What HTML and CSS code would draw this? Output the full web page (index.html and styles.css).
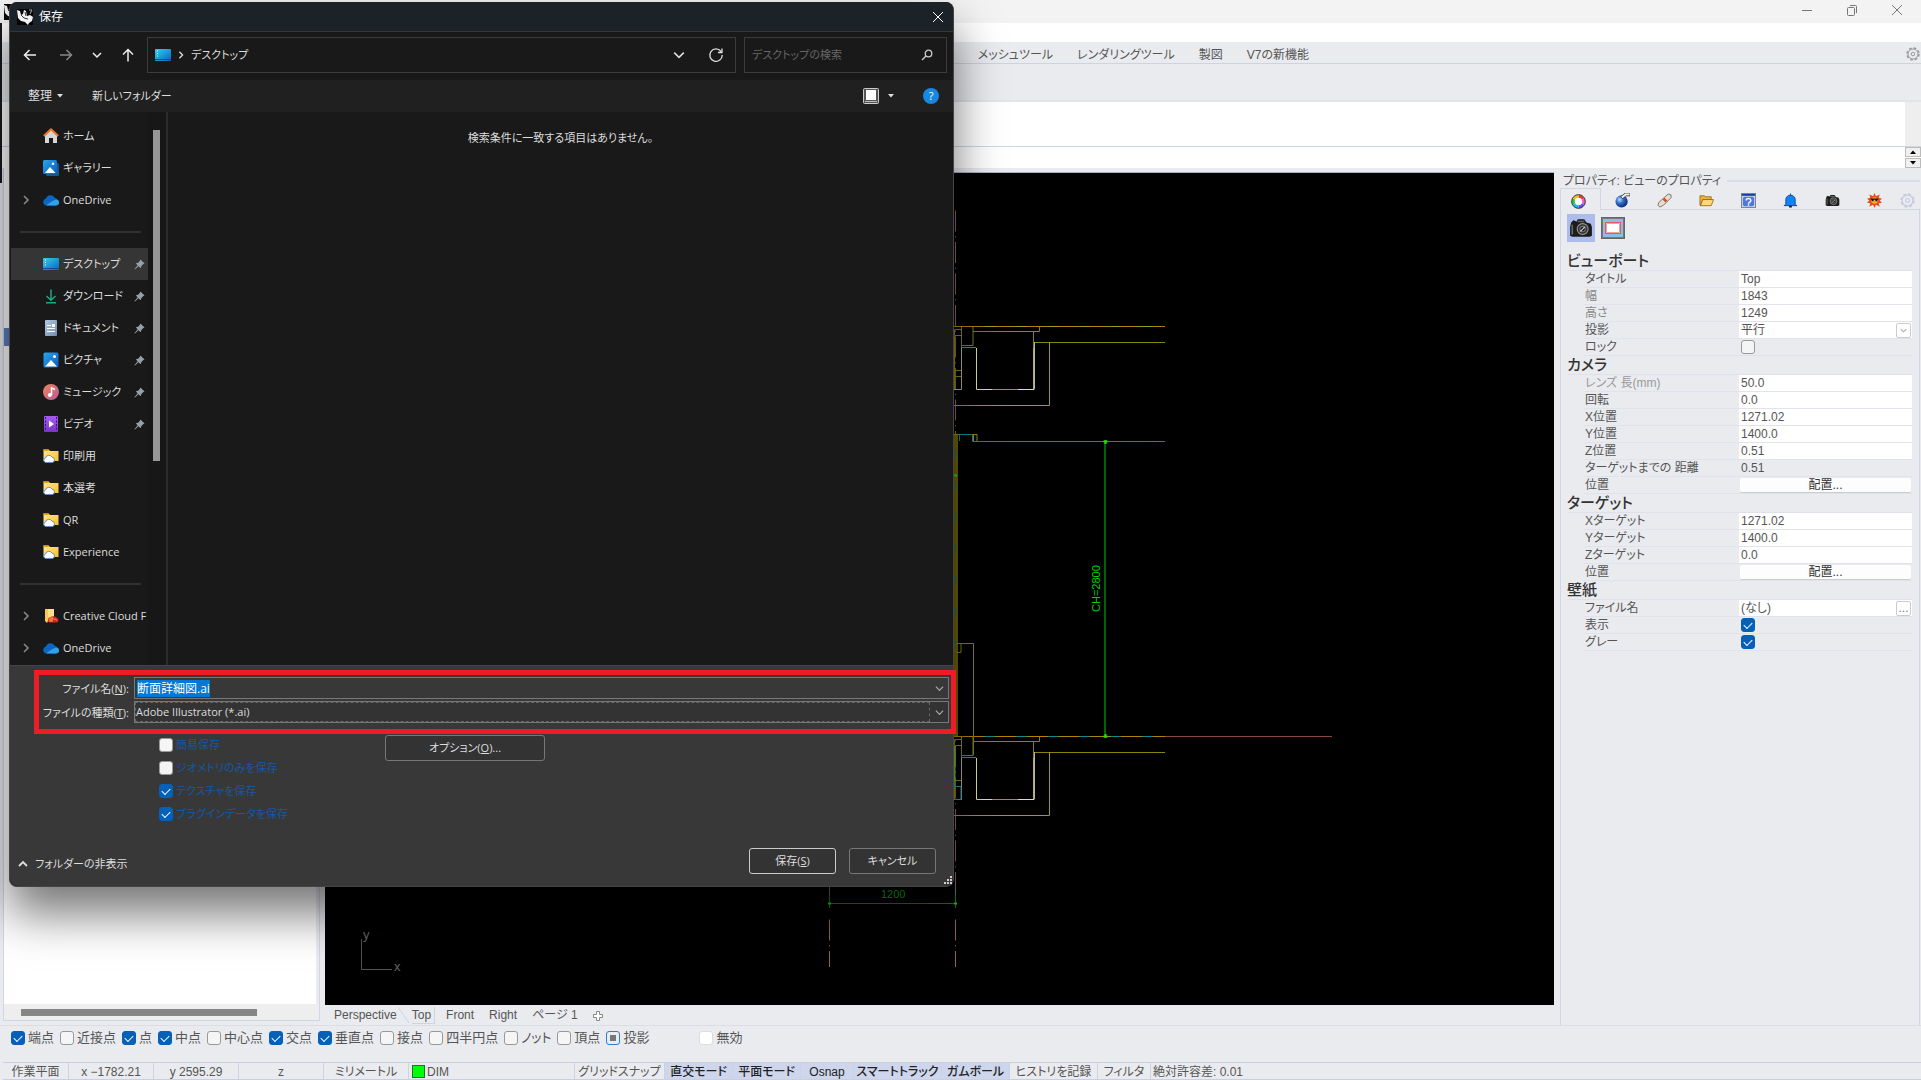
FILE: index.html
```html
<!DOCTYPE html>
<html lang="ja">
<head>
<meta charset="utf-8">
<title>保存</title>
<link rel="stylesheet" href="styles.css">
</head>
<body>
<svg class="sprite" aria-hidden="true">
  <defs>
    <linearGradient id="g-desk" x1="0" y1="0" x2="1" y2="1"><stop offset="0" stop-color="#35d0ea"/><stop offset="1" stop-color="#0a62c4"/></linearGradient>
    <linearGradient id="g-pic" x1="0" y1="0" x2="1" y2="1"><stop offset="0" stop-color="#2ba4ec"/><stop offset="1" stop-color="#0a5cc0"/></linearGradient>
    <linearGradient id="g-music" x1="0" y1="0" x2="1" y2="1"><stop offset="0" stop-color="#f2865a"/><stop offset="1" stop-color="#b6589c"/></linearGradient>
    <linearGradient id="g-video" x1="0" y1="0" x2="0" y2="1"><stop offset="0" stop-color="#a65cf0"/><stop offset="1" stop-color="#7a34c8"/></linearGradient>
    <linearGradient id="g-doc" x1="0" y1="0" x2="1" y2="1"><stop offset="0" stop-color="#b4c8de"/><stop offset="1" stop-color="#6f8cb2"/></linearGradient>
    <linearGradient id="g-folder" x1="0" y1="0" x2="1" y2="1"><stop offset="0" stop-color="#ffe79a"/><stop offset="1" stop-color="#fbc02d"/></linearGradient>
    <radialGradient id="g-ball" cx=".35" cy=".35" r=".7"><stop offset="0" stop-color="#b8dcff"/><stop offset=".45" stop-color="#2e6cc8"/><stop offset="1" stop-color="#0a2470"/></radialGradient>
    <symbol id="i-rhino" viewBox="0 0 16 16"><path d="M0 0h16v16H0z" fill="#050505"/><path d="M0 1l3 1 1 4 2-1 1-4 2 1 1 5 3-1 3 2-1 4-3 2-1 2-3-3-4-1-3-3z" fill="#f2f2f2"/><path d="M4 6l3 3 4 1M8 3l1 4" stroke="#333" fill="none"/><path d="M12 1h3l-2 4" stroke="#aaa" fill="none"/></symbol>
    <symbol id="i-desktop" viewBox="0 0 16 16"><rect y="2" width="16" height="12" rx="1" fill="url(#g-desk)"/><path d="M2 4h1M2 6.500h1M2 9h1" stroke="#d8f6ff"/><path d="M0 12.500h16" stroke="#0c4f96"/></symbol>
    <symbol id="i-home" viewBox="0 0 16 16"><path d="M2 7.500L8 2l6 5.500V15h-4v-5H6v5H2z" fill="#d6d6d6"/><path d="M.8 8L8 1.300 15.200 8" stroke="#f0762b" stroke-width="2" fill="none" stroke-linejoin="round"/></symbol>
    <symbol id="i-picture" viewBox="0 0 16 16"><rect x=".5" y=".5" width="15" height="15" rx="1.500" fill="url(#g-pic)"/><path d="M2 14.500L8 8l6 6.500z" fill="#fff"/><circle cx="11.500" cy="4.500" r="1.500" fill="#fff"/></symbol>
    <symbol id="i-gallery" viewBox="0 0 16 16"><rect x="3" y="3" width="13" height="13" rx="1.500" fill="#1553a4"/><rect width="14" height="14" rx="1.500" fill="url(#g-pic)"/><path d="M2 13l5-6 5.500 6z" fill="#fff"/><circle cx="10" cy="3.800" r="1.300" fill="#fff"/></symbol>
    <symbol id="i-onedrive" viewBox="0 0 16 16"><path d="M3.500 13.500a3.500 3.500 0 01-.6-6.900A5 5 0 0112 6a4 4 0 011 7.500z" fill="#0a66c2"/><path d="M3 13.500l6.500-4.500 3.500-1.500a3 3 0 010 6z" fill="#2ca3ea"/></symbol>
    <symbol id="i-download" viewBox="0 0 16 16"><path d="M8 1.500V12M3.500 8L8 12.200 12.500 8M3 14.800h10" stroke="#25a583" stroke-width="1.500" fill="none"/></symbol>
    <symbol id="i-doc" viewBox="0 0 16 16"><rect x="2" y="0" width="12" height="16" rx="1" fill="url(#g-doc)"/><path d="M4 5.500h4M4 8.500h8M4 11.500h8" stroke="#fff"/><rect x="9" y="4" width="3" height="3" fill="#fff"/></symbol>
    <symbol id="i-music" viewBox="0 0 16 16"><circle cx="8" cy="8" r="8" fill="url(#g-music)"/><path d="M8.500 11V4l3.500 1.500" stroke="#fff" stroke-width="1.500" fill="none"/><circle cx="6.800" cy="11" r="2" fill="#fff"/></symbol>
    <symbol id="i-video" viewBox="0 0 16 16"><rect x="1" width="14" height="16" rx="1" fill="url(#g-video)"/><path d="M2.500 1v14M13.500 1v14" stroke="#3b1470" stroke-dasharray="2 1.500"/><path d="M6 4.500l5 3.500-5 3.500z" fill="#fff"/></symbol>
    <symbol id="i-folder" viewBox="0 0 16 16"><path d="M.5 1.500h5l1.500 1.500h8.500v10H.5z" fill="url(#g-folder)"/><path d="M.5 1.500h5l1.500 1.500H.5z" fill="#e8a21c"/><path d="M2.800 14.500a2.300 2.300 0 01-.3-4.500 3.500 3.500 0 016.500-.8 2.700 2.700 0 01.5 5.300z" fill="#fff" stroke="#5b8fd0"/></symbol>
    <symbol id="i-cc" viewBox="0 0 16 16"><path d="M2 1h9v12H5l-1 2-2-2z" fill="#f8c95a"/><path d="M5 1h6v10H5z" fill="#ffe08a"/><path d="M7.500 14.500a2.600 2.600 0 010-5.200 4.300 4.300 0 016.500.8 2.300 2.300 0 010 4.400z" fill="#c8281e"/><path d="M5 10l5-2v6H6z" fill="#f0682c"/><path d="M8 12.500a1.500 1.500 0 013-1 1.500 1.500 0 012.500 1" stroke="#ff9a6a" fill="none"/></symbol>
    <symbol id="i-pin" viewBox="0 0 12 12"><path d="M7 .5L11.500 5l-1.500.6-2 2L7.500 10 5 8 1 11.500.5 11 4 7 2 4.500 4.500 4l2-2z" fill="#9aa0a8"/></symbol>
    <symbol id="i-down" viewBox="0 0 10 10"><path d="M1 3l4 4 4-4" stroke="currentColor" fill="none" stroke-width="1.300"/></symbol>
    <symbol id="i-right" viewBox="0 0 10 10"><path d="M3 1l4 4-4 4" stroke="currentColor" fill="none" stroke-width="1.600"/></symbol>
    <symbol id="i-up" viewBox="0 0 10 10"><path d="M1 7l4-4 4 4" stroke="currentColor" fill="none" stroke-width="1.800"/></symbol>
    <symbol id="i-tri" viewBox="0 0 6 4"><path d="M0 0h6L3 3.500z" fill="currentColor"/></symbol>
    <symbol id="i-x" viewBox="0 0 12 12"><path d="M1 1l10 10M11 1L1 11" stroke="currentColor" fill="none"/></symbol>
    <symbol id="i-gear" viewBox="0 0 14 14"><circle cx="7" cy="7" r="5" fill="none" stroke="currentColor"/><circle cx="7" cy="7" r="6" fill="none" stroke="currentColor" stroke-width="1.500" stroke-dasharray="2.700 2"/><circle cx="7" cy="7" r="1.800" fill="none" stroke="currentColor"/></symbol>
    <symbol id="i-camera" viewBox="0 0 22 18"><path d="M2 4l2-2 3 1 1-2h6l2 3 4 1 1 3v8l-2 1H3l-2-1V8z" fill="#1c1c1c"/><path d="M3 6v9M8 3h6" stroke="#666" stroke-width="1.500"/><circle cx="12.500" cy="10" r="5" fill="#333" stroke="#999"/><circle cx="12.500" cy="10" r="2.500" fill="#111" stroke="#777"/><path d="M10.500 12l4-4" stroke="#ddd"/></symbol>
  </defs>
</svg>

<div class="app">
  <header class="titlebar">
    <svg class="applogo"><use href="#i-rhino"/></svg>
    <button class="winbtn" aria-label="最小化"><svg viewBox="0 0 12 12"><path d="M1 6.500h10" stroke="#777"/></svg></button>
    <button class="winbtn" aria-label="元に戻す"><svg viewBox="0 0 12 12"><rect x="1.500" y="3.500" width="7" height="8" rx="1" fill="none" stroke="#777"/><path d="M4 1.500h5.500a1 1 0 011 1V9" fill="none" stroke="#777"/></svg></button>
    <button class="winbtn" aria-label="アプリを閉じる"><svg><use href="#i-x"/></svg></button>
  </header>
  <div class="menubar"></div>
  <nav class="tooltabs">
    <a href="#">ソリッドツール</a><a href="#">メッシュツール</a><a href="#">レンダリングツール</a><a href="#">製図</a><a href="#">V7の新機能</a>
    <svg class="gear"><use href="#i-gear"/></svg>
  </nav>
  <div class="toolbar"></div>
  <div class="history"><span class="track"></span></div>
  <div class="prompt"><div class="spin"><button aria-label="上へ"><svg class="flip"><use href="#i-tri"/></svg></button><button aria-label="下へ"><svg><use href="#i-tri"/></svg></button></div></div>

  <main class="work">
    <aside class="leftpanel"><div class="sheet"><span class="mark"></span></div><div class="hscroll"><span></span></div></aside>

    <section class="viewcol">
      <div class="viewport">
        <svg class="drawing" width="1229" height="832" viewBox="325 173 1229 832" fill="none">
          <g stroke="#94700c" stroke-dasharray="21 4.700 1.200 4.600"><path d="M955.500 210.500V895M955.500 919.500V967M829.500 919.500V967"/></g>
          <path d="M954 434h4v303h-4z" fill="#6c6200"/>
          <path d="M955.500 450V735" stroke="#0b7070" stroke-dasharray="9 22.500"/>
          <g id="slab" stroke="#8a820a">
            <path d="M961.500 326v19.500h11.500v-19.500M973 331.500h66.500V327M1033.500 332V389M1034 342.500h131"/>
            <path d="M1049.500 342V405.500H953" stroke="#a29a10"/>
            <path d="M961 347.500h15M954.500 329.500h7v6h-7zM954.500 336v54M954 370.500h7M954 376.500h7M961.500 335v13"/>
            <path d="M961.500 348v41.500h-8.500" stroke="#b8a8a4"/>
            <path d="M976.500 348v41.500h15.500M1018 389.500h16V348" stroke="#e4e098"/>
            <path d="M992 389.500h26" stroke="#a29a10"/>
            <path d="M1034.500 342v47" stroke="#b4b0ac"/>
          </g>
          <use href="#slab" y="410"/>
          <path d="M953 326.500h212M953 736.500h212" stroke="#b08408"/>
          <path d="M985 326.500h180" stroke="#93a61c" stroke-dasharray="10 21.500"/>
          <path d="M985 736.500h170" stroke="#0c8c8c" stroke-dasharray="10 21.500"/>
          <path d="M1165 736.500h167" stroke="#8a4742"/>
          <path d="M953 434.500h24v7M973.500 434v7" stroke="#98900a"/>
          <path d="M959.500 441v-6.500h13v7H1165" stroke="#0b9090"/>
          <path d="M957 643.500h16.500V755M957 652.500h4v-9" stroke="#8a820a"/>
          <path d="M954.500 746v35" stroke="#6fb438" stroke-width="2"/>
          <path d="M954.500 781v5.500h6.500v13h-8" stroke="#2b98ac"/>
          <path d="M1105 441.500V736.500" stroke="#006400" stroke-width="2"/>
          <path d="M1103.500 441.500h4M1105.500 440v4M1103.500 736.500h4M1105.500 734v4M953 475.500h4" stroke="#14e014" stroke-width="2"/>
          <path d="M829.500 887v8M955.500 887v8" stroke="#8a780c"/>
          <path d="M829.500 895v13M955.500 895v13M829 903.500h127" stroke="#009000"/>
          <path d="M828 903.500h3M954 903.500h3" stroke="#10d010" stroke-width="2"/>
          <text class="dim" x="881" y="898" fill="#0cb00c">1200</text>
          <text class="dim" transform="translate(1100 612) rotate(-90)" fill="#00d000">CH=2800</text>
          <path d="M361.500 939v30.500H392" stroke="#555"/>
          <text class="axis" x="363" y="939" fill="#666">y</text><text class="axis" x="394" y="971" fill="#666">x</text>
        </svg>
      </div>
      <nav class="viewtabs"><a href="#">Perspective</a><a href="#" class="on">Top</a><a href="#">Front</a><a href="#">Right</a><a href="#">ページ 1</a><svg class="plus" viewBox="0 0 10 10"><path d="M3.500.5h3v3h3v3h-3v3h-3v-3h-3v-3h3z" fill="#fff" stroke="#888"/></svg></nav>
    </section>

    <aside class="props">
      <h1><span>プロパティ: ビューのプロパティ</span></h1>
      <div class="proptabs">
        <span class="tab on"><svg viewBox="0 0 16 16" fill="none" stroke-width="3"><path d="M8 2.500a5.500 5.500 0 014.800 2.800" stroke="#f03c2c"/><path d="M12.800 5.300a5.500 5.500 0 010 5.400" stroke="#f05ad0"/><path d="M12.800 10.700A5.500 5.500 0 018 13.500" stroke="#6a50f0"/><path d="M8 13.500a5.500 5.500 0 01-4.800-2.800" stroke="#18b8f0"/><path d="M3.200 10.700a5.500 5.500 0 010-5.400" stroke="#1cd048"/><path d="M3.200 5.300A5.500 5.500 0 018 2.500" stroke="#f4c41c"/><circle cx="8" cy="8" r="3.800" fill="#fff" stroke="none"/><circle cx="8" cy="8" r="7.300" stroke="#222" stroke-width="1"/></svg></span>
        <span class="tab"><svg viewBox="0 0 16 16"><circle cx="7" cy="9" r="6.500" fill="url(#g-ball)"/><path d="M6 4l5-4h5v3h-4L8 6z" fill="#eee" stroke="#222" stroke-width=".8"/></svg></span>
        <span class="tab"><svg viewBox="0 0 16 16"><path d="M12 1l3 1v3l-8 8-4 2-2-2 1-3z" fill="#e8dccb" stroke="#555" stroke-width=".8"/><path d="M8 5l3 3-2 2-3-3z" fill="#e04a20"/></svg></span>
        <span class="tab"><svg viewBox="0 0 16 16"><path d="M1 3h5l1 1h6v3H4l-2 6H1z" fill="#f0b13a" stroke="#8a5a10" stroke-width=".8"/><path d="M4 7h11.500l-2.500 6.500H1.500z" fill="#ffd978" stroke="#8a5a10" stroke-width=".8"/></svg></span>
        <span class="tab"><svg viewBox="0 0 16 16"><rect x=".5" y=".5" width="15" height="15" fill="#d0d4de" stroke="#7c8290"/><path d="M1 1h14v2H1z" fill="#1b3c98"/><rect x="2" y="4" width="12" height="10" rx="2" fill="#4a7ade"/><path d="M5.500 8a2.500 2.200 0 115 0c0 2-2.500 1.500-2.500 3.500M8 12v1.500" stroke="#fff" stroke-width="1.500" fill="none"/></svg></span>
        <span class="tab"><svg viewBox="0 0 16 16"><path d="M8 .5V3M3 12.500V7a5 4.700 0 0110 0v5.500l2 1H1z" fill="#1084ff" stroke="#164a80"/><path d="M6.500 14.500h3" stroke="#222" stroke-width="2"/></svg></span>
        <span class="tab"><svg><use href="#i-camera"/></svg></span>
        <span class="tab"><svg viewBox="0 0 16 16"><path d="M8 0l1.500 3.500 4-2-1 3.500L16 6l-2.500 2 2.500 2.500-3.500.5 1 3.500-4-2L8 16l-1.500-3.500-4 2 1-3.500L0 10.500 2.500 8 0 6l3.500-1-1-3.500 4 2z" fill="#e84a18"/><circle cx="8" cy="8" r="3.500" fill="#ffb020"/><path d="M4 6.500h8M5 8h2M9 8h2" stroke="#111" stroke-width="1.500"/></svg></span>
        <span class="tab last"><svg><use href="#i-gear"/></svg></span>
      </div>
      <div class="propbody">
        <div class="modes"><button class="mode on" aria-label="カメラのプロパティ"><svg><use href="#i-camera"/></svg></button><button class="mode" aria-label="ビューポートのプロパティ"><svg viewBox="0 0 24 22"><rect x=".5" y=".5" width="23" height="21" fill="#8cbce8" stroke="#666"/><rect x="1.500" y="1.500" width="21" height="19" fill="none" stroke="#777"/><rect x="4.500" y="5.500" width="15" height="11" fill="#fff" stroke="#e85a5a"/><path d="M5.500 6.500h13v9h-13z" stroke="#f0a0a0" fill="none"/></svg></button></div>
        <h2>ビューポート</h2>
        <div class="row"><label for="p1">タイトル</label><input id="p1" value="Top"></div>
        <div class="row dimmed"><label for="p2">幅</label><input id="p2" value="1843"></div>
        <div class="row dimmed"><label for="p3">高さ</label><input id="p3" value="1249"></div>
        <div class="row"><label for="p4">投影</label><div class="pick"><select id="p4"><option>平行</option></select><svg><use href="#i-down"/></svg></div></div>
        <div class="row"><label for="p5">ロック</label><input id="p5" type="checkbox"></div>
        <h2>カメラ</h2>
        <div class="row faint"><label for="c1">レンズ 長(mm)</label><input id="c1" value="50.0"></div>
        <div class="row"><label for="c2">回転</label><input id="c2" value="0.0"></div>
        <div class="row"><label for="c3">X位置</label><input id="c3" value="1271.02"></div>
        <div class="row"><label for="c4">Y位置</label><input id="c4" value="1400.0"></div>
        <div class="row"><label for="c5">Z位置</label><input id="c5" value="0.51"></div>
        <div class="row"><label for="c6">ターゲットまでの 距離</label><output id="c6">0.51</output></div>
        <div class="row"><label for="c7">位置</label><button id="c7" class="place">配置...</button></div>
        <h2>ターゲット</h2>
        <div class="row"><label for="t1">Xターゲット</label><input id="t1" value="1271.02"></div>
        <div class="row"><label for="t2">Yターゲット</label><input id="t2" value="1400.0"></div>
        <div class="row"><label for="t3">Zターゲット</label><input id="t3" value="0.0"></div>
        <div class="row"><label for="t4">位置</label><button id="t4" class="place">配置...</button></div>
        <h2>壁紙</h2>
        <div class="row"><label for="w1">ファイル名</label><div class="pick"><input id="w1" value="(なし)"><button class="more" aria-label="参照">...</button></div></div>
        <div class="row"><label for="w2">表示</label><input id="w2" type="checkbox" checked></div>
        <div class="row"><label for="w3">グレー</label><input id="w3" type="checkbox" checked></div>
      </div>
    </aside>
  </main>

  <div class="osnap">
    <label><input type="checkbox" checked>端点</label><label><input type="checkbox">近接点</label><label><input type="checkbox" checked>点</label><label><input type="checkbox" checked>中点</label><label><input type="checkbox">中心点</label><label><input type="checkbox" checked>交点</label><label><input type="checkbox" checked>垂直点</label><label><input type="checkbox">接点</label><label><input type="checkbox">四半円点</label><label><input type="checkbox">ノット</label><label><input type="checkbox">頂点</label><label><input type="checkbox" class="mixed">投影</label><label class="off"><input type="checkbox" class="pale">無効</label>
  </div>
  <footer class="status">
    <span class="s1">作業平面</span><span class="s2">x −1782.21</span><span class="s2">y 2595.29</span><span class="s2">z</span><span class="s2">ミリメートル</span><span class="s3"><i></i>DIM</span><span class="s4">グリッドスナップ</span><span class="s5 on">直交モード</span><span class="s5 on">平面モード</span><span class="s6 on">Osnap</span><span class="s7 on">スマートトラック</span><span class="s5 on">ガムボール</span><span class="s7">ヒストリを記録</span><span class="s6">フィルタ</span><span class="s8">絶対許容差: 0.01</span>
  </footer>
  <div class="edge"></div>
</div>

<section class="dialog" role="dialog" aria-label="保存">
  <header class="dtitle"><svg class="logo"><use href="#i-rhino"/></svg><span>保存</span><button aria-label="閉じる"><svg><use href="#i-x"/></svg></button></header>
  <div class="dnav">
    <div class="arrows">
      <button aria-label="戻る" class="back"><svg viewBox="0 0 14 14"><path d="M13 7H1.500M6.500 2l-5 5 5 5"/></svg></button>
      <button aria-label="進む" class="dis"><svg viewBox="0 0 14 14"><path d="M1 7h11.500M7.500 2l5 5-5 5"/></svg></button>
      <button aria-label="履歴"><svg viewBox="0 0 14 14"><path d="M3 5l4 4 4-4"/></svg></button>
      <button aria-label="上へ"><svg viewBox="0 0 14 14"><path d="M7 13.500V1.500M2 6.500l5-5 5 5"/></svg></button>
    </div>
    <div class="address"><svg class="ic"><use href="#i-desktop"/></svg><svg class="crumb"><use href="#i-right"/></svg><span>デスクトップ</span><svg class="drop"><use href="#i-down"/></svg><svg class="fresh" viewBox="0 0 16 16"><path d="M13 4.500A6.200 6.200 0 1014.200 8M14 1.500v4h-4" fill="none" stroke="#ddd" stroke-width="1.300"/></svg></div>
    <div class="search"><input type="text" aria-label="検索" placeholder="デスクトップの検索"><svg viewBox="0 0 12 12"><circle cx="7.500" cy="4.500" r="3.300" fill="none" stroke="#ccc" stroke-width="1.300"/><path d="M5 7l-4 4" stroke="#ccc" stroke-width="1.500"/></svg></div>
  </div>
  <div class="dtools"><button class="org">整理<svg><use href="#i-tri"/></svg></button><button>新しいフォルダー</button>
    <button class="view" aria-label="表示の変更"><svg class="vi" viewBox="0 0 16 16"><rect x=".5" y=".5" width="15" height="15" rx="1" fill="#555" stroke="#ccc"/><rect x="3" y="2" width="10" height="10" fill="#fff"/><path d="M2 13.500h12" stroke="#bbb"/></svg><svg class="tr"><use href="#i-tri"/></svg></button><button class="help" aria-label="ヘルプ">?</button></div>
  <div class="dbody">
    <ul class="tree">
      <li><svg class="ic"><use href="#i-home"/></svg>ホーム</li>
      <li><svg class="ic"><use href="#i-gallery"/></svg>ギャラリー</li>
      <li><svg class="ch"><use href="#i-right"/></svg><svg class="ic"><use href="#i-onedrive"/></svg>OneDrive</li>
      <li class="sep"></li>
      <li class="sel"><svg class="ic"><use href="#i-desktop"/></svg>デスクトップ<svg class="pin"><use href="#i-pin"/></svg></li>
      <li><svg class="ic"><use href="#i-download"/></svg>ダウンロード<svg class="pin"><use href="#i-pin"/></svg></li>
      <li><svg class="ic"><use href="#i-doc"/></svg>ドキュメント<svg class="pin"><use href="#i-pin"/></svg></li>
      <li><svg class="ic"><use href="#i-picture"/></svg>ピクチャ<svg class="pin"><use href="#i-pin"/></svg></li>
      <li><svg class="ic"><use href="#i-music"/></svg>ミュージック<svg class="pin"><use href="#i-pin"/></svg></li>
      <li><svg class="ic"><use href="#i-video"/></svg>ビデオ<svg class="pin"><use href="#i-pin"/></svg></li>
      <li><svg class="ic"><use href="#i-folder"/></svg>印刷用</li>
      <li><svg class="ic"><use href="#i-folder"/></svg>本選考</li>
      <li><svg class="ic"><use href="#i-folder"/></svg>QR</li>
      <li><svg class="ic"><use href="#i-folder"/></svg>Experience</li>
      <li class="sep"></li>
      <li><svg class="ch"><use href="#i-right"/></svg><svg class="ic"><use href="#i-cc"/></svg>Creative Cloud F</li>
      <li><svg class="ch"><use href="#i-right"/></svg><svg class="ic"><use href="#i-onedrive"/></svg>OneDrive</li>
    </ul>
    <div class="vscroll"><span></span></div>
    <div class="files">検索条件に一致する項目はありません。</div>
  </div>
  <div class="dform">
    <div class="fields">
      <label for="fn">ファイル名(<u>N</u>):</label><div class="combo"><input id="fn" type="text" value="断面詳細図.ai"><svg><use href="#i-down"/></svg></div>
      <label for="ft">ファイルの種類(<u>T</u>):</label><div class="combo type"><select id="ft"><option>Adobe Illustrator (*.ai)</option></select><svg><use href="#i-down"/></svg></div>
    </div>
    <div class="opts">
      <div class="checks"><label><input type="checkbox">簡易保存</label><label><input type="checkbox">ジオメトリのみを保存</label><label><input type="checkbox" checked>テクスチャを保存</label><label><input type="checkbox" checked>プラグインデータを保存</label></div>
      <button class="btn wide">オプション(<u>O</u>)...</button>
    </div>
    <div class="actions"><button class="hide"><svg><use href="#i-up"/></svg>フォルダーの非表示</button><button class="btn primary">保存(<u>S</u>)</button><button class="btn">キャンセル</button></div>
  </div>
  <svg class="grip" viewBox="0 0 9 9"><path d="M6 1h2M6 4h2M3 4h2M6 7h2M3 7h2M0 7h2" stroke="#ccc" stroke-width="2"/></svg>
  <div class="callout"></div>
</section>
</body>
</html>
```

FILE: styles.css
```css
* { box-sizing: border-box; }
body { margin: 0; font: 12px/16px "Liberation Sans", "Noto Sans CJK JP", sans-serif; font-feature-settings: "palt"; color: #555; background: #eaebef; overflow: hidden; }
button, input, select { font: inherit; font-feature-settings: inherit; color: inherit; margin: 0; padding: 0; border: 0; background: none; border-radius: 0; appearance: none; }
a { color: inherit; text-decoration: none; }
svg { display: block; flex: none; }
.sprite { position: absolute; width: 0; height: 0; }

.app { display: flex; flex-direction: column; min-height: 100vh; position: relative; }
.titlebar { display: flex; justify-content: flex-end; gap: 33px; height: 23px; padding: 4px 18px 0 4px; background: #f3f3f3; color: #777; }
.applogo { width: 16px; height: 16px; margin-right: auto; }
.winbtn { width: 12px; height: 12px; }
.winbtn svg { width: 12px; height: 12px; }
.menubar { height: 19px; background: #fff; }
.tooltabs { display: flex; gap: 24px; height: 22px; padding: 5px 1px 0 881px; border-bottom: 1px solid #cdd2e4; white-space: nowrap; }
.tooltabs .gear { width: 14px; height: 14px; margin-left: auto; color: #999; }
.toolbar { height: 38px; border-bottom: 2px solid #e4e5ec; }
.history { display: flex; justify-content: flex-end; height: 45px; background: #fff; border-bottom: 1px solid #ccd8e2; }
.track { width: 16px; background: #eee; }
.prompt { display: flex; justify-content: flex-end; height: 21px; background: #fff; }
.spin { display: grid; gap: 1px; width: 16px; }
.spin button { display: grid; place-items: center; border: 1px solid #bbb; background: #f0f0f0; color: #000; }
.spin svg { width: 6px; height: 4px; }
.flip { transform: rotate(180deg); }

.work { flex: 1; display: grid; grid-template-columns: 325px 1fr 367px; border-bottom: 1px solid #dcdee6; }
.leftpanel { display: flex; flex-direction: column; margin: 0 5px 4px 3px; border: 1px solid #d0d6e6; border-top: 0; }
.sheet { flex: 1; margin-right: 3px; padding-top: 160px; background: #fff; }
.mark { display: block; width: 8px; height: 18px; background: #5b80c0; }
.hscroll { height: 16px; padding: 5px 17px; background: #eee; }
.hscroll span { display: block; width: 236px; height: 7px; background: #868686; }
.viewcol { display: flex; flex-direction: column; padding-top: 4px; }
.viewport { flex: 1; background: #000; border-top: 1px solid #a8b0c8; overflow: hidden; }
.dim { font-size: 11px; }
.axis { font-size: 13px; }
.viewtabs { display: flex; gap: 15px; height: 20px; padding: 2px 9px; align-items: flex-start; }
.viewtabs .on { position: relative; border: 1px solid #cdd2e4; border-width: 0 1px 1px 0; padding-right: 3px; margin-right: -4px; }
.viewtabs .on::before { content: ""; position: absolute; left: -9px; top: 0; height: 16px; border-left: 1px solid #cdd2e4; transform: skewX(35deg); }
.plus { width: 10px; height: 10px; margin-top: 4px; }

.props { display: flex; flex-direction: column; padding: 4px 1px 0 6px; }
.props h1 { display: flex; gap: 6px; align-items: center; margin: 0 0 0 3px; height: 16px; font: inherit; padding-top: 1px; }
.props h1::after { content: ""; flex: 1; height: 2px; background: #d8dbe8; }
.proptabs { display: flex; height: 22px; }
.tab { width: 42px; display: grid; place-items: center; padding-top: 3px; border-bottom: 1px solid #d2d6e4; }
.tab.on { width: 41px; padding-right: 4px; border: 1px solid #d2d6e4; border-bottom: 0; }
.tab svg { width: 15px; height: 15px; }
.tab.last { flex: 1; color: #c4cae0; }
.propbody { flex: 1; padding: 4px 7px 0 6px; border: 1px solid #d2d6e4; border-width: 0 1px 0 1px; }
.modes { display: flex; gap: 6px; align-items: center; height: 28px; }
.mode.on { display: grid; place-items: center; width: 28px; height: 28px; background: #acbcec; }
.mode svg { width: 24px; height: 22px; }
.props h2 { margin: 0; height: 19px; border-bottom: 1px solid #dfe1ea; font-size: 15px; font-weight: 500; line-height: 18px; color: #333; }
.modes + h2 { margin-top: 10px; }
.row { display: grid; grid-template-columns: 154px minmax(0, 1fr); height: 17px; margin-left: 16px; padding-left: 2px; border-bottom: 1px solid #e0e2ec; line-height: 16px; }
.row input:not([type]), .pick { width: 100%; height: 16px; background: #fff; padding-left: 2px; }
.row output { padding-left: 2px; }
.dimmed label { color: #888; }
.faint label { color: #999; }
.pick { display: flex; align-items: center; min-width: 0; padding-right: 1px; }
.pick input:not([type]) { padding: 0; flex: 1; min-width: 0; }
.pick select { flex: 1; height: 16px; }
.pick svg, .more { width: 15px; height: 15px; padding: 3px; border: 1px solid #ccc; border-radius: 2px; background: #fff; color: #777; }
.more { padding: 0; line-height: 10px; }
.place { height: 15px; margin: 1px 1px 0; border-radius: 2px; background: #fdfdfd; border-bottom: 1px solid #ccc; line-height: 14px; color: #333; }

input[type="checkbox"] { flex: none; width: 14px; height: 14px; border: 1px solid #999; border-radius: 3px; background: #f5f5f5; }
.row input[type="checkbox"] { margin: 1px 2px; }
input[type="checkbox"]:checked { border-color: #0560b8; background: #0560b8; }
input[type="checkbox"]:checked::after { content: ""; display: block; width: 7px; height: 4px; margin: 3px 0 0 2px; border: solid #fff; border-width: 0 0 1px 1px; transform: rotate(-45deg); }
.osnap .mixed { border-color: #2f7cd0; background: #777 content-box; padding: 3px; }
.osnap .pale { border-color: #ddd; background: #fff; }

.osnap { display: flex; gap: 6px; height: 36px; padding: 4px 11px 0; font-size: 13px; line-height: 16px; white-space: nowrap; }
.osnap label { display: flex; gap: 3px; height: 16px; align-items: center; }
.osnap .off { margin-left: 44px; }
.status { display: flex; height: 18px; margin-left: 3px; border: solid #c9cfdf; border-width: 1px 0; line-height: 18px; white-space: nowrap; }
.status span { border-right: 1px solid #cdd2e2; text-align: center; }
.status .on { background: #cdd6ec; font-weight: 500; color: #222; }
.s1 { width: 66px; }
.s2 { width: 85px; }
.status .s3 { display: flex; gap: 2px; width: 166px; padding-left: 3px; }
.s3 i { width: 13px; height: 13px; margin-top: 2px; background: #0f0; border: 1px solid #173; }
.s4 { width: 90px; }
.s5 { width: 68px; }
.s6 { width: 53px; }
.s7 { width: 88px; }
.status .s8 { border: 0; padding-left: 2px; }
.edge { position: absolute; left: 0; top: 23px; width: 2px; height: 160px; background: #16181c; }

.dialog { position: absolute; left: 9px; top: 2px; width: 945px; display: flex; flex-direction: column; border: 1px solid #444; border-top: 0; border-radius: 8px; background: #191919; box-shadow: 0 26px 48px rgba(0, 0, 0, .55); color: #ddd; font-family: "Open Sans", "Noto Sans CJK JP", sans-serif; font-size: 11px; }
.dtitle { display: flex; align-items: center; gap: 6px; height: 30px; padding: 0 9px 0 7px; border-bottom: 1px solid #30363a; border-radius: 8px 8px 0 0; background: #1b2228; color: #fff; font-size: 12px; }
.logo { width: 16px; height: 16px; }
.dtitle button { margin-left: auto; }
.dtitle button svg { width: 12px; height: 12px; }
.dnav { display: flex; gap: 8px; height: 48px; padding: 5px 6px 7px 12px; }
.arrows { display: flex; width: 117px; gap: 17px; align-items: center; padding-left: 1px; }
.arrows svg { width: 14px; height: 14px; fill: none; stroke: #eee; stroke-width: 1.5; }
.arrows .back { margin-right: 5px; }
.arrows .dis svg { stroke: #888; }
.address { flex: 1; display: flex; align-items: center; border: 1px solid #3c3c3c; padding: 0 11px 0 7px; }
.ic { width: 16px; height: 16px; }
.crumb { width: 8px; height: 8px; margin: 0 6px; }
.drop { width: 12px; height: 12px; margin-left: auto; }
.fresh { width: 16px; height: 16px; margin-left: 23px; }
.search { display: flex; align-items: center; width: 203px; border: 1px solid #3c3c3c; padding: 0 13px 0 7px; }
.search input { flex: 1; min-width: 0; }
.search input::placeholder { color: #666; opacity: 1; }
.search svg { width: 12px; height: 12px; }
.dtools { display: flex; align-items: center; height: 32px; padding: 0 14px 0 18px; background: #202020; }
.org { display: flex; align-items: center; gap: 5px; margin-right: 29px; font-size: 12px; }
.org svg, .view .tr { width: 6px; height: 4px; }
.view { display: flex; align-items: center; gap: 9px; margin-left: auto; }
.vi { width: 16px; height: 16px; }
.help { width: 16px; height: 16px; margin-left: 29px; border-radius: 50%; background: #1787e0; color: #fff; line-height: 16px; }
.dbody { display: flex; }
.tree { width: 138px; margin: 0; padding: 8px 0 1px 1px; list-style: none; }
.tree li { position: relative; display: flex; align-items: center; gap: 4px; height: 32px; padding-left: 32px; white-space: nowrap; }
.tree .sel { background: #353535; }
.tree .sep::before { content: ""; width: 121px; height: 2px; margin-left: -23px; background: #303030; }
.ch { position: absolute; left: 10px; top: 11px; width: 10px; height: 10px; color: #888; }
.pin { width: 11px; height: 11px; margin: 0 3px 0 auto; }
.vscroll { width: 20px; padding: 18px 0 0 5px; border-right: 2px solid #2c2c2c; background: #171717; }
.vscroll span { display: block; width: 7px; height: 331px; background: #969696; }
.files { flex: 1; padding-top: 18px; text-align: center; }
.dform { padding: 11px 4px 12px 4px; border-top: 1px solid #444; border-radius: 0 0 8px 8px; background: #383838; }
.fields { display: grid; grid-template-columns: 115px 1fr; column-gap: 5px; row-gap: 2px; line-height: 23px; text-align: right; white-space: nowrap; }
.fields > * { height: 22px; }
.combo { display: flex; align-items: center; border: 1px solid #777; padding: 0 4px 0 2px; }
.combo svg { width: 9px; height: 9px; margin-left: auto; color: #aaa; }
.combo input { width: 73px; height: 17px; background: #0078d7; color: #fff; font-size: 12px; }
.combo.type { background: #333; padding-left: 1px; }
.combo select { flex: 1; height: 18px; margin-right: 6px; outline: 1px dashed #666; line-height: 18px; }
.opts { display: flex; padding: 10px 0 0 145px; }
.checks { width: 226px; color: #1259a8; }
.checks label { display: flex; align-items: center; gap: 3px; height: 23px; }
.btn { width: 87px; height: 26px; border: 1px solid #777; border-radius: 3px; background: #333; }
.btn.wide { width: 160px; margin-top: 2px; }
.btn.primary { border-color: #ccc; margin-left: auto; }
.actions { display: flex; gap: 13px; padding: 23px 13px 0 4px; }
.hide { display: flex; align-items: center; gap: 7px; padding-top: 6px; }
.hide svg { width: 10px; height: 10px; }
.grip { position: absolute; right: 0; bottom: 1px; width: 9px; height: 9px; }
.callout { position: absolute; left: 24px; right: -3px; top: 668px; height: 64px; border: 5px solid #ee1c24; pointer-events: none; }
```
